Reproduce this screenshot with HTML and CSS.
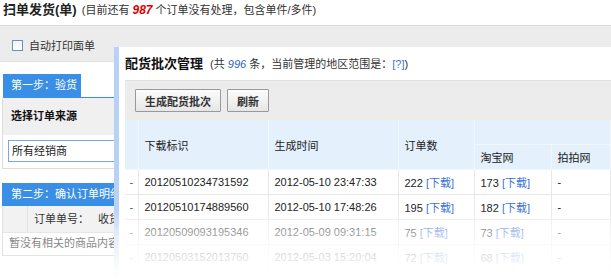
FILE: index.html
```html
<!DOCTYPE html>
<html lang="zh-CN">
<head>
    <meta charset="UTF-8">
    <title>扫单发货</title>
    <link rel="stylesheet" href="styles.css">
</head>
<body>
    <!-- 页头 -->
    <div class="head">
        <span class="head-title">扫单发货(单)</span>
        <span class="head-note">(目前还有 <b class="count">987</b> 个订单没有处理，包含单件/多件)</span>
    </div>

    <div class="opts">
        <label class="check"><span class="box"></span>自动打印面单</label>
    </div>

    <!-- 第一步 -->
    <div class="tabs">
        <span class="tab">第一步：验货</span>
    </div>
    <div class="step">
        <div class="step-head">选择订单来源</div>
        <div class="step-body">
            <div class="input">所有经销商</div>
        </div>
    </div>

    <!-- 第二步 -->
    <div class="band">第二步：确认订单明细</div>
    <div class="detail">
        <div class="detail-head">
            <span class="cell-blank"></span>
            <span class="cell-no">订单单号：</span>
            <span class="cell-recv">收货人：</span>
        </div>
        <div class="detail-empty">暂没有相关的商品内容</div>
    </div>

    <!-- 配货批次管理 弹层 -->
    <div class="dialog">
        <div class="dialog-title">
            <b>配货批次管理</b>
            <span class="dialog-note">(共 <i class="num">996</i> 条，当前管理的地区范围是：<a class="link">[?]</a>)</span>
        </div>
        <div class="toolbar">
            <button class="btn">生成配货批次</button>
            <button class="btn">刷新</button>
        </div>
        <table class="grid">
            <colgroup>
                <col style="width:13px">
                <col style="width:130px">
                <col style="width:130px">
                <col style="width:76px">
                <col style="width:77px">
                <col>
            </colgroup>
            <thead>
                <tr>
                    <th rowspan="2"></th>
                    <th rowspan="2">下载标识</th>
                    <th rowspan="2">生成时间</th>
                    <th rowspan="2">订单数</th>
                    <th colspan="2"></th>
                </tr>
                <tr>
                    <th>淘宝网</th>
                    <th>拍拍网</th>
                </tr>
            </thead>
            <tbody id="rows"></tbody>
        </table>
        <div class="fade"></div>
    </div>

    <script>
        // 批次数据
        const batches = [
            ["20120510234731592", "2012-05-10 23:47:33", 222, 173],
            ["20120510174889560", "2012-05-10 17:48:26", 195, 182],
            ["20120509093195346", "2012-05-09 09:31:15", 75, 73],
            ["20120503152013760", "2012-05-03 15:20:04", 72, 68]
        ];

        const tbody = document.getElementById("rows");
        batches.forEach(function (b) {
            const tr = document.createElement("tr");
            tr.innerHTML =
                '<td class="dash">-</td>' +
                '<td>' + b[0] + '</td>' +
                '<td>' + b[1] + '</td>' +
                '<td>' + b[2] + ' <a class="link">[下载]</a></td>' +
                '<td>' + b[3] + ' <a class="link">[下载]</a></td>' +
                '<td>-</td>';
            tbody.appendChild(tr);
        });
    </script>
</body>
</html>
```

FILE: styles.css
```css
body {
    margin: 0;
    background: #fff;
    font-family: "Liberation Sans", "Noto Sans CJK SC", sans-serif;
    font-size: 11px;
    color: #333;
    position: relative;
    height: 279px;
    overflow: hidden;
}
.head {
    height: 26px;
    padding-left: 3px;
    line-height: 19px;
    border-bottom: 1px solid #dcdcdc;
    box-sizing: border-box;
    white-space: nowrap;
}
.head-title {
    font-size: 13px;
    font-weight: bold;
    color: #222;
}
.head-note {
    color: #333;
    margin-left: 2px;
}
.count {
    color: #e10000;
    font-style: italic;
    font-size: 12px;
}
.opts {
    background: #ececec;
    height: 36px;
    padding: 11px 0 0 12px;
    box-sizing: border-box;
    border-bottom: 1px solid #e2e2e2;
}
.check {
    display: flex;
    align-items: center;
    gap: 6px;
}
.box {
    width: 9px;
    height: 9px;
    border: 1px solid #6f8fbf;
    background: linear-gradient(#f3f3f3, #fff);
}
.tabs {
    margin: 12px 0 0 3px;
    border-bottom: 1px solid #3a8ee6;
    height: 23px;
}
.tab {
    display: inline-block;
    width: 78px;
    height: 23px;
    line-height: 22px;
    padding-left: 8px;
    box-sizing: border-box;
    background: #3a8ee6;
    color: #fff;
}
.step {
    margin-left: 2px;
    border-left: 1px solid #dcdcdc;
    border-bottom: 1px solid #dcdcdc;
}
.step-head {
    background: #f0f0f0;
    height: 37px;
    line-height: 37px;
    padding-left: 8px;
    font-weight: bold;
    color: #111;
}
.step-body {
    padding: 5px 0 6px 5px;
}
.input {
    height: 20px;
    line-height: 20px;
    border: 1px solid #7aa7dc;
    padding-left: 3px;
    color: #222;
}
.band {
    margin: 14px 0 0 2px;
    height: 23px;
    line-height: 23px;
    padding-left: 9px;
    background: #3a8ee6;
    color: #fff;
}
.detail {
    margin-left: 2px;
    border-left: 1px solid #e0e0e0;
    border-bottom: 1px solid #e4e4e4;
}
.detail-head {
    display: flex;
    background: #f2f2f2;
    height: 26px;
    line-height: 26px;
    border-bottom: 1px solid #e6e6e6;
    white-space: nowrap;
}
.cell-blank {
    width: 24px;
    border-right: 1px solid #e2e2e2;
}
.cell-no {
    padding-left: 6px;
    width: 64px;
}
.detail-empty {
    height: 22px;
    line-height: 20px;
    padding-left: 6px;
    color: #888;
}
/* 弹层 */
.dialog {
    position: absolute;
    left: 114px;
    top: 47px;
    right: 0;
    bottom: 0;
    background: #fff;
    border-left: 5px solid #b7d2f4;
    padding-left: 6px;
}
.dialog-title {
    height: 33px;
    line-height: 33px;
    white-space: nowrap;
}
.dialog-title b {
    font-size: 13px;
    color: #111;
}
.dialog-note {
    margin-left: 4px;
}
.num {
    color: #1f5fc4;
}
.link {
    color: #3a72d6;
}
.toolbar {
    height: 40px;
    background: #ececec;
    border-top: 1px solid #e0e0e0;
    padding: 8px 0 0 10px;
    box-sizing: border-box;
}
.btn {
    height: 23px;
    padding: 0 9px;
    margin-right: 3px;
    font-family: inherit;
    font-size: 11px;
    font-weight: bold;
    color: #333;
    border: 1px solid #999;
    border-radius: 1px;
    background: linear-gradient(#fcfcfc, #e6e6e6);
}
.grid {
    border-collapse: collapse;
    table-layout: fixed;
    width: 100%;
}
.grid th {
    background: #e4f0fc;
    font-weight: normal;
    text-align: left;
    padding: 0 0 0 6px;
    height: 24px;
    border: 1px solid #f2f7fd;
    border-top: none;
    color: #222;
    white-space: nowrap;
}
.grid td {
    height: 24px;
    padding: 0 0 0 6px;
    border: 1px solid #e8e8e8;
    border-top: none;
    color: #222;
    white-space: nowrap;
}
.grid td.dash {
    padding: 0;
    text-align: center;
    color: #2c5aa0;
}
.grid th:first-child,
.grid td:first-child {
    border-left: none;
}
.fade {
    position: absolute;
    left: -5px;
    right: 0;
    top: 162px;
    bottom: 0;
    background: linear-gradient(rgba(255, 255, 255, 0) 0, rgba(255, 255, 255, 0.55) 23px, rgba(255, 255, 255, 0.85) 48px, #fff 68px);
}
```
